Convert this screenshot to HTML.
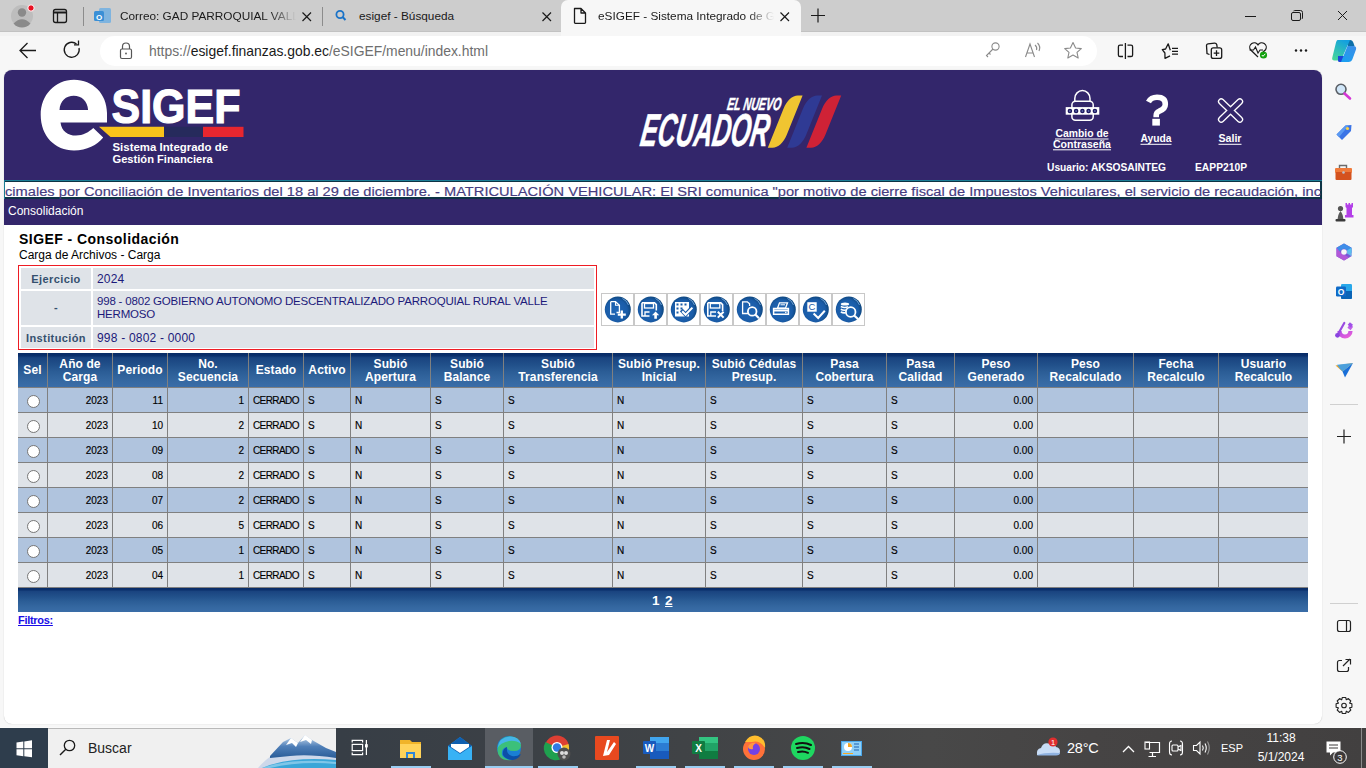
<!DOCTYPE html>
<html><head><meta charset="utf-8">
<style>
*{margin:0;padding:0;box-sizing:border-box}
html,body{width:1366px;height:768px;overflow:hidden;background:#f7f7f7;font-family:"Liberation Sans",sans-serif;position:relative}
.abs{position:absolute}
#tabs{left:0;top:0;width:1366px;height:31px;background:#cdcdcd}
.tabt{font-size:11.8px;color:#1a1a1a;white-space:nowrap;line-height:16px}
#toolbar{left:0;top:31px;width:1366px;height:39px;background:#f7f7f7}
#url{left:100px;top:36px;width:997px;height:30px;background:#fff;border-radius:15px}
#sidebar{left:1322px;top:70px;width:44px;height:658px;background:#f7f7f7}
#page{left:4px;top:70px;width:1318px;height:654px;background:#fff;border-radius:8px;overflow:hidden;box-shadow:0 0 1px rgba(0,0,0,.3)}
#taskbar{left:0;top:728px;width:1366px;height:40px;background:#3c3a3b}
#hdr{left:0;top:0;width:1318px;height:155px;background:#33266b}
.btn{width:33px;height:33px;border:1px solid #c8c8c8;background:#fff}
.thd{background:linear-gradient(#072b66 0%,#0b306c 8%,#1a4480 14%,#21508a 35%,#2b5d96 55%,#3467a0 78%,#3a6da8 100%)}
.th{display:flex;align-items:center;justify-content:center;text-align:center;color:#fff;font-size:12px;font-weight:bold;line-height:13px;letter-spacing:0.1px;padding-top:1px}
.td{font-size:10px;color:#000;line-height:24px;white-space:nowrap;-webkit-text-stroke:0.15px #000}
.radio{width:13px;height:13px;border-radius:50%;background:#fff;border:1px solid #767676}
</style></head><body>
<!-- TAB STRIP -->
<div id="tabs" class="abs">
  <svg class="abs" style="left:0;top:0" width="1366" height="31">
    <!-- avatar -->
    <circle cx="22" cy="16" r="11" fill="#bdbdbd"/>
    <circle cx="22" cy="12.5" r="4.2" fill="#8a8a8a"/>
    <path d="M13.5 23.5 Q22 15 30.5 23.5 A11 11 0 0 1 13.5 23.5Z" fill="#8a8a8a"/>
    <circle cx="31" cy="8" r="3.2" fill="#e81123" stroke="#fff" stroke-width="1"/>
    <!-- tab actions -->
    <rect x="53.5" y="9.5" width="13" height="13" rx="2" fill="none" stroke="#1a1a1a" stroke-width="1.3"/>
    <line x1="53.5" y1="12.5" x2="66.5" y2="12.5" stroke="#1a1a1a" stroke-width="2"/>
    <line x1="57.5" y1="12" x2="57.5" y2="22.5" stroke="#1a1a1a" stroke-width="1.3"/>
    <line x1="83.5" y1="7" x2="83.5" y2="26" stroke="#8c8c8c" stroke-width="1"/>
    <!-- outlook icon -->
    <rect x="99" y="8" width="12" height="15" rx="1.5" fill="#7fb4df"/>
    <rect x="94" y="11" width="10" height="10" rx="1.5" fill="#3a8fd6"/>
    <text x="99" y="19.5" font-size="8" font-weight="bold" fill="#fff" text-anchor="middle" font-family="Liberation Sans">O</text>
    <line x1="322.5" y1="7" x2="322.5" y2="26" stroke="#8c8c8c" stroke-width="1"/>
    <!-- close x tab1 -->
    <path d="M302.5 12.5 L311 21 M311 12.5 L302.5 21" stroke="#1a1a1a" stroke-width="1.2"/>
    <!-- search icon -->
    <circle cx="340" cy="14.5" r="3.6" fill="none" stroke="#1a73c8" stroke-width="1.8"/>
    <line x1="342.8" y1="17.3" x2="345.5" y2="20" stroke="#1a73c8" stroke-width="2"/>
    <path d="M542.5 12.5 L551 21 M551 12.5 L542.5 21" stroke="#1a1a1a" stroke-width="1.2"/>
  </svg>
  <div class="abs tabt" style="left:120px;top:8px;width:176px;overflow:hidden;-webkit-mask-image:linear-gradient(90deg,#000 85%,transparent)">Correo: GAD PARROQUIAL VALLE</div>
  <div class="abs tabt" style="left:359px;top:8px">esigef - Búsqueda</div>
  <!-- active tab -->
  <div class="abs" style="left:561px;top:0;width:240px;height:31px;background:#f7f7f7;border-radius:7px 7px 0 0"></div>
  <svg class="abs" style="left:0;top:0" width="1366" height="31">
    <path d="M574.5 8.5 H581 L585.5 13 V22.5 A0.8 0.8 0 0 1 584.7 23.3 H575.3 A0.8 0.8 0 0 1 574.5 22.5Z M581 8.5 V13 H585.5" fill="none" stroke="#1a1a1a" stroke-width="1.3" stroke-linejoin="round"/>
    <path d="M780.5 12.5 L789 21 M789 12.5 L780.5 21" stroke="#1a1a1a" stroke-width="1.2"/>
    <path d="M811 15.5 H825 M818 8.5 V22.5" stroke="#1a1a1a" stroke-width="1.2"/>
    <!-- window controls -->
    <line x1="1245" y1="16.5" x2="1256" y2="16.5" stroke="#1a1a1a" stroke-width="1"/>
    <rect x="1291.5" y="12.5" width="9" height="8" rx="1.5" fill="none" stroke="#1a1a1a" stroke-width="1"/>
    <path d="M1293.5 11 Q1294 10.5 1296 10.5 H1300.5 Q1302.5 10.5 1302.5 12.5 V17 Q1302.5 18.5 1302 19" fill="none" stroke="#1a1a1a" stroke-width="1"/>
    <path d="M1338 11 L1347 20 M1347 11 L1338 20" stroke="#1a1a1a" stroke-width="1"/>
  </svg>
  <div class="abs tabt" style="left:598px;top:8px;width:176px;overflow:hidden;white-space:nowrap;-webkit-mask-image:linear-gradient(90deg,#000 85%,transparent)">eSIGEF - Sistema Integrado de Gestión</div>
</div>
<!-- TOOLBAR -->
<div id="toolbar" class="abs"></div>
<div class="abs" style="left:0;top:31px;width:1366px;height:1px;background:#c2c2c2"></div>
<div class="abs" style="left:0;top:32px;width:1366px;height:4px;background:#f2f2f2"></div>
<div class="abs" style="left:561px;top:31px;width:240px;height:5px;background:#f7f7f7"></div>
<div id="url" class="abs"></div>
<svg class="abs" style="left:0;top:31px" width="1366" height="39">
  <!-- back -->
  <path d="M20.5 19.5 H36 M27.5 12 L20 19.5 L27.5 27" fill="none" stroke="#1a1a1a" stroke-width="1.3"/>
  <!-- refresh -->
  <path d="M79 17 A7.5 7.5 0 1 1 76.5 13" fill="none" stroke="#1a1a1a" stroke-width="1.3"/>
  <path d="M78.5 9.5 V13.8 H74" fill="none" stroke="#1a1a1a" stroke-width="1.3"/>
  <!-- lock -->
  <g transform="translate(0,1)"><rect x="120.5" y="17" width="11" height="9.5" rx="1.5" fill="none" stroke="#555" stroke-width="1.2"/>
  <path d="M122.5 17 V14.5 A3.5 3.5 0 0 1 129.5 14.5 V17" fill="none" stroke="#555" stroke-width="1.2"/>
  <circle cx="126" cy="21.5" r="0.9" fill="#555"/></g>
  <!-- key -->
  <circle cx="995.5" cy="15.5" r="3.6" fill="none" stroke="#8a8a8a" stroke-width="1.1"/>
  <path d="M993 18 L986.5 24.5 L988 26 M989 22 L990.5 23.5" fill="none" stroke="#8a8a8a" stroke-width="1.1"/>
  <!-- read aloud -->
  <path d="M1025.5 26 L1030 13 L1034.5 26 M1027 22 H1033" fill="none" stroke="#8a8a8a" stroke-width="1.1"/>
  <path d="M1035 14 Q1037.5 16 1036.5 19 M1037.5 12 Q1041 15.5 1039 20" fill="none" stroke="#8a8a8a" stroke-width="1.1"/>
  <!-- star -->
  <path d="M1073 11.5 L1075.6 17 L1081.3 17.6 L1077 21.4 L1078.2 27 L1073 24.1 L1067.8 27 L1069 21.4 L1064.7 17.6 L1070.4 17Z" fill="none" stroke="#8a8a8a" stroke-width="1.1" stroke-linejoin="round"/>
  <!-- split -->
  <g transform="translate(0,-31)" fill="none" stroke="#1a1a1a" stroke-width="1.3">
    <path d="M1123 45.2 H1120 Q1118.4 45.2 1118.4 46.8 V54.9 Q1118.4 56.5 1120 56.5 H1123"/>
    <path d="M1127.5 45.2 H1131 Q1132.6 45.2 1132.6 46.8 V54.9 Q1132.6 56.5 1131 56.5 H1127.5"/>
    <path d="M1125.4 43 V59"/>
  </g>
  <!-- favorites -->
  <g transform="translate(0,-31)" fill="none" stroke="#1a1a1a" stroke-width="1.3" stroke-linejoin="round">
    <path d="M1170.3 50.2 L1168.2 43.8 L1165.6 49 L1162.3 49.6 L1164.9 53 L1165 58.3 L1170 55.8"/>
    <path d="M1172 48.4 H1178 M1172 51.3 H1178 M1172 54.2 H1178"/>
  </g>
  <!-- collections -->
  <g transform="translate(0,-31)" fill="none" stroke="#1a1a1a" stroke-width="1.3">
    <path d="M1209.5 54.5 L1207 53.5 L1206.5 45.5 Q1206.5 44 1208 43.8 L1214.5 43.2 Q1216.3 43.1 1216.8 44.8 L1217.2 47.5"/>
    <rect x="1211.3" y="47.9" width="10.4" height="10.5" rx="2"/>
    <path d="M1216.5 50.3 V56 M1213.7 53.15 H1219.3"/>
  </g>
  <!-- health -->
  <path d="M1258 26 L1250.5 18.8 A4 4 0 0 1 1258 13.8 A4 4 0 0 1 1265.5 18.8 L1263 21" fill="none" stroke="#1a1a1a" stroke-width="1.2"/>
  <path d="M1249.5 19 H1253.5 L1255.5 16 L1258 22 L1260 19 H1263" fill="none" stroke="#1a1a1a" stroke-width="1.1"/>
  <circle cx="1263.5" cy="24" r="3.6" fill="#13a10e"/>
  <path d="M1261.8 24 L1263 25.3 L1265.3 22.8" fill="none" stroke="#fff" stroke-width="1"/>
  <!-- more -->
  <circle cx="1296" cy="19.5" r="1.2" fill="#1a1a1a"/><circle cx="1301" cy="19.5" r="1.2" fill="#1a1a1a"/><circle cx="1306" cy="19.5" r="1.2" fill="#1a1a1a"/>
  <!-- copilot -->
  <defs>
    <linearGradient id="cpA" x1="0.7" y1="0" x2="0.2" y2="1"><stop offset="0" stop-color="#139fe0"/><stop offset="1" stop-color="#46d69a"/></linearGradient>
    <linearGradient id="cpB" x1="0.8" y1="0" x2="0.2" y2="1"><stop offset="0" stop-color="#3a8ee8"/><stop offset="1" stop-color="#1aa0f0"/></linearGradient>
  </defs>
  <g transform="translate(0,-31)">
  <path d="M1345 40 H1350 Q1352.5 40 1353.5 43 L1354.5 46 H1348Z" fill="#0d6fa8"/>
  <path d="M1337.5 40 H1350 L1342 58 Q1341 60.5 1338.5 60.5 H1334.5 Q1331.5 60.5 1332.3 57.5 L1336 42.5 Q1336.6 40 1337.5 40Z" fill="url(#cpA)"/>
  <path d="M1338 56 L1345 56 L1342 62 H1339.5 Q1337.5 62 1338 60Z" fill="#1d46d8"/>
  <path d="M1347.5 46 H1353.5 Q1356.8 46 1356 49.5 L1352.5 59 Q1351.5 62 1348.5 62 H1341 L1347.5 46Z" fill="url(#cpB)"/>
  </g>
</svg>
<div class="abs" style="left:149px;top:43px;font-size:13.9px;color:#6e6e6e;white-space:nowrap">https://<span style="color:#1a1a1a">esigef.finanzas.gob.ec</span>/eSIGEF/menu/index.html</div>
<div id="sidebar" class="abs"></div>
<div id="page" class="abs">
  <div id="hdr" class="abs"></div>
  <div class="abs" style="left:0;top:110px;width:1318px;height:19px;background:#0d3345;border-top:1px solid #1a7d96;border-left:1px solid #1a7d96"></div>
  <div class="abs" style="left:1px;top:112px;width:1315px;height:15px;background:#fff"></div>
</div>
<svg class="abs" style="left:0;top:0" width="1366" height="768">
  <!-- eSIGEF logo -->
  <path fill="#fff" fill-rule="evenodd" d="M107 122.4 L60.5 122.4 C61.5 131 68 135.5 76 135.5 C83 135.5 89 132 93.3 128 L103.2 137.5 C97 145 87 150.5 74 150.5 C55 150.5 40.7 136 40.7 115 C40.7 95 55 79.7 74 79.7 C93 79.7 107 94 107 113 Z M59.5 109.9 C60 101 66 95.8 73.8 95.8 C81.5 95.8 87.5 101 88.1 109.9 Z"/>
  <text x="111.5" y="122.5" font-family="Liberation Sans" font-weight="bold" font-size="49" fill="#fff" stroke="#fff" stroke-width="1.2" textLength="129" lengthAdjust="spacingAndGlyphs">SIGEF</text>
  <path d="M99 126.8 H164 V137 H110.5 Z" fill="#f9c31a"/>
  <rect x="164" y="126.8" width="39" height="10.2" fill="#262a5c"/>
  <rect x="203" y="126.8" width="40.5" height="10.2" fill="#e8262f"/>
  <text x="112.5" y="150.7" font-family="Liberation Sans" font-weight="bold" font-size="11.2" fill="#fff" textLength="115.5" lengthAdjust="spacingAndGlyphs">Sistema Integrado de</text>
  <text x="112.5" y="162.8" font-family="Liberation Sans" font-weight="bold" font-size="11.2" fill="#fff" textLength="100.3" lengthAdjust="spacingAndGlyphs">Gestión Financiera</text>
  <!-- EL NUEVO ECUADOR -->
  <g font-family="Liberation Sans" font-weight="bold" font-style="italic" fill="#fff" stroke="#fff" stroke-width="0.5">
    <text x="0" y="0" font-size="17.5" textLength="54" lengthAdjust="spacingAndGlyphs" transform="translate(726.5,110.1) skewX(-9)">EL NUEVO</text>
    <text x="0" y="0" font-size="46" textLength="128" lengthAdjust="spacingAndGlyphs" transform="translate(639,145.6) skewX(-9)">ECUADOR</text>
  </g>
  <path d="M802.6 95.5 L786.8 134.8 C783.7 142.6 778.0 147.8 772.6 147.8 L767.8 147.8 L783.6 108.5 C786.7 100.7 792.4 95.5 797.8 95.5 Z" fill="#f0c531"/>
  <path d="M822.0 95.5 L806.2 134.8 C803.1 142.6 797.4 147.8 792.0 147.8 L787.2 147.8 L803.0 108.5 C806.1 100.7 811.8 95.5 817.2 95.5 Z" fill="#2f3a94"/>
  <path d="M841.2 95.5 L825.4 134.8 C822.3 142.6 816.6 147.8 811.2 147.8 L806.4 147.8 L822.2 108.5 C825.3 100.7 831.0 95.5 836.4 95.5 Z" fill="#cf2236"/>
  <!-- lock icon -->
  <g fill="none" stroke="#fff" stroke-width="1.5">
    <path d="M1074.8 101 V98.5 A7.6 8 0 0 1 1090 98.5 V101"/>
    <rect x="1071.9" y="101.2" width="21.3" height="19" rx="3.5"/>
  </g>
  <rect x="1065.7" y="107.1" width="33.6" height="7.6" fill="#fff"/>
  <g fill="#1d1660"><circle cx="1069.9" cy="111" r="2.3"/><circle cx="1076.1" cy="111" r="2.3"/><circle cx="1082.4" cy="111" r="2.3"/><circle cx="1088.6" cy="111" r="2.3"/><circle cx="1094.9" cy="111" r="2.3"/></g>
  <g fill="#5a6aa8"><circle cx="1069.9" cy="111" r="0.9"/><circle cx="1076.1" cy="111" r="0.9"/><circle cx="1082.4" cy="111" r="0.9"/><circle cx="1088.6" cy="111" r="0.9"/><circle cx="1094.9" cy="111" r="0.9"/></g>
  <!-- ? -->
  <path d="M1148.5 102 Q1151 97.3 1157 97.3 Q1165.3 97.3 1165.3 104.3 Q1165.3 109 1159.5 111 Q1156.2 112.3 1156.2 115.5 V117.2" fill="none" stroke="#fff" stroke-width="5.6"/>
  <rect x="1152.3" y="118.8" width="7.6" height="6.8" fill="#fff"/>
  <!-- X outline -->
  <path d="M1221.2 101.5 L1239.9 119.5 M1239.9 101.5 L1221.2 119.5" stroke="#fff" stroke-width="6.6" stroke-linecap="round"/>
  <path d="M1221.2 101.5 L1239.9 119.5 M1239.9 101.5 L1221.2 119.5" stroke="#33266b" stroke-width="4" stroke-linecap="round"/>
  <!-- labels -->
  <g font-family="Liberation Sans" font-weight="bold" font-size="11" fill="#fff" text-anchor="middle">
    <text x="1082" y="136.8" textLength="53" lengthAdjust="spacingAndGlyphs">Cambio de</text>
    <text x="1082" y="147.7" textLength="58" lengthAdjust="spacingAndGlyphs">Contraseña</text>
    <text x="1156" y="142" textLength="31" lengthAdjust="spacingAndGlyphs">Ayuda</text>
    <text x="1230" y="142" textLength="23" lengthAdjust="spacingAndGlyphs">Salir</text>
  </g>
  <g fill="#fff">
    <rect x="1055" y="138.5" width="53.5" height="1"/>
    <rect x="1053" y="149.3" width="58" height="1"/>
    <rect x="1140.5" y="143.8" width="31" height="1"/>
    <rect x="1218.5" y="143.8" width="23" height="1"/>
  </g>
  <g font-family="Liberation Sans" font-weight="bold" font-size="10" fill="#fff">
    <text x="1047" y="171.4" textLength="119" lengthAdjust="spacingAndGlyphs">Usuario: AKSOSAINTEG</text>
    <text x="1195" y="171.4" textLength="52" lengthAdjust="spacingAndGlyphs">EAPP210P</text>
  </g>
  <!-- marquee text -->
  <text x="5" y="195.5" font-family="Liberation Sans" font-size="12.5" fill="#463c80" stroke="#463c80" stroke-width="0.15" textLength="1316" lengthAdjust="spacingAndGlyphs">cimales por Conciliación de Inventarios del 18 al 29 de diciembre. - MATRICULACIÓN VEHICULAR: El SRI comunica "por motivo de cierre fiscal de Impuestos Vehiculares, el servicio de recaudación, inc</text>
  <text x="8" y="215" font-family="Liberation Sans" font-size="12" fill="#fff" textLength="75.5" lengthAdjust="spacingAndGlyphs">Consolidación</text>
</svg>
<div class="abs" style="left:19px;top:231px;font-size:14px;font-weight:bold;letter-spacing:0.45px;color:#000;line-height:16px;white-space:nowrap">SIGEF - Consolidación</div>
<div class="abs" style="left:19px;top:247.5px;font-size:12px;color:#000;line-height:14px;white-space:nowrap">Carga de Archivos - Carga</div>
<div class="abs" style="left:18px;top:265px;width:579px;height:85px;border:1px solid #ee1c24"></div>
<div class="abs" style="left:21px;top:268px;width:70px;height:21px;background:#dfe3e8;font-size:11px;font-weight:bold;color:#34506e;letter-spacing:0.4px;text-align:center;white-space:nowrap;line-height:23px">Ejercicio</div>
<div class="abs" style="left:93px;top:268px;width:501px;height:21px;background:#dfe3e8;font-size:12px;color:#1c1a7a;white-space:nowrap;line-height:23px;padding-left:4px;letter-spacing:0.2px">2024</div>
<div class="abs" style="left:21px;top:291px;width:70px;height:34px;background:#dfe3e8;font-size:11px;font-weight:bold;color:#34506e;letter-spacing:0.4px;text-align:center;white-space:nowrap;line-height:33px">-</div>
<div class="abs" style="left:93px;top:291px;width:501px;height:34px;background:#dfe3e8"></div>
<div class="abs" style="left:97px;top:295px;font-size:12px;color:#1c1a7a;white-space:nowrap;line-height:13px;font-size:11.5px;letter-spacing:-0.19px">998 - 0802 GOBIERNO AUTONOMO DESCENTRALIZADO PARROQUIAL RURAL VALLE<br>HERMOSO</div>
<div class="abs" style="left:21px;top:327px;width:70px;height:21px;background:#dfe3e8;font-size:11px;font-weight:bold;color:#34506e;letter-spacing:0.4px;text-align:center;white-space:nowrap;line-height:23px">Institución</div>
<div class="abs" style="left:93px;top:327px;width:501px;height:21px;background:#dfe3e8;font-size:12px;color:#1c1a7a;white-space:nowrap;line-height:23px;padding-left:4px;letter-spacing:0.2px">998 - 0802 - 0000</div>
<div class="abs thd" style="left:18px;top:353px;width:1290px;height:34px"></div>
<div class="abs" style="left:18px;top:387px;width:1290px;height:1px;background:#808080"></div>
<div class="abs th" style="left:18px;top:353px;width:29px;height:34px">Sel</div>
<div class="abs th" style="left:48px;top:353px;width:64px;height:34px">Año de<br>Carga</div>
<div class="abs th" style="left:113px;top:353px;width:54px;height:34px">Periodo</div>
<div class="abs th" style="left:168px;top:353px;width:80px;height:34px">No.<br>Secuencia</div>
<div class="abs th" style="left:249px;top:353px;width:54px;height:34px">Estado</div>
<div class="abs th" style="left:304px;top:353px;width:46px;height:34px">Activo</div>
<div class="abs th" style="left:351px;top:353px;width:79px;height:34px">Subió<br>Apertura</div>
<div class="abs th" style="left:431px;top:353px;width:72px;height:34px">Subió<br>Balance</div>
<div class="abs th" style="left:504px;top:353px;width:108px;height:34px">Subió<br>Transferencia</div>
<div class="abs th" style="left:613px;top:353px;width:92px;height:34px">Subió Presup.<br>Inicial</div>
<div class="abs th" style="left:706px;top:353px;width:96px;height:34px">Subió Cédulas<br>Presup.</div>
<div class="abs th" style="left:803px;top:353px;width:83px;height:34px">Pasa<br>Cobertura</div>
<div class="abs th" style="left:887px;top:353px;width:67px;height:34px">Pasa<br>Calidad</div>
<div class="abs th" style="left:955px;top:353px;width:82px;height:34px">Peso<br>Generado</div>
<div class="abs th" style="left:1038px;top:353px;width:95px;height:34px">Peso<br>Recalculado</div>
<div class="abs th" style="left:1134px;top:353px;width:84px;height:34px">Fecha<br>Recalculo</div>
<div class="abs th" style="left:1219px;top:353px;width:89px;height:34px">Usuario<br>Recalculo</div>
<div class="abs" style="left:18px;top:388px;width:1290px;height:24px;background:#b0c4de"></div>
<div class="abs" style="left:18px;top:412px;width:1290px;height:1px;background:#808080"></div>
<div class="abs td" style="left:48px;top:389px;width:60px;text-align:right;">2023</div>
<div class="abs td" style="left:113px;top:389px;width:50px;text-align:right;">11</div>
<div class="abs td" style="left:168px;top:389px;width:76px;text-align:right;">1</div>
<div class="abs td" style="left:253px;top:389px;letter-spacing:-0.6px;">CERRADO</div>
<div class="abs td" style="left:308px;top:389px;">S</div>
<div class="abs td" style="left:355px;top:389px;">N</div>
<div class="abs td" style="left:435px;top:389px;">S</div>
<div class="abs td" style="left:508px;top:389px;">S</div>
<div class="abs td" style="left:617px;top:389px;">N</div>
<div class="abs td" style="left:710px;top:389px;">S</div>
<div class="abs td" style="left:807px;top:389px;">S</div>
<div class="abs td" style="left:891px;top:389px;">S</div>
<div class="abs td" style="left:955px;top:389px;width:78px;text-align:right;">0.00</div>
<div class="abs radio" style="left:27px;top:395px"></div>
<div class="abs" style="left:18px;top:413px;width:1290px;height:24px;background:#dfe3e8"></div>
<div class="abs" style="left:18px;top:437px;width:1290px;height:1px;background:#808080"></div>
<div class="abs td" style="left:48px;top:414px;width:60px;text-align:right;">2023</div>
<div class="abs td" style="left:113px;top:414px;width:50px;text-align:right;">10</div>
<div class="abs td" style="left:168px;top:414px;width:76px;text-align:right;">2</div>
<div class="abs td" style="left:253px;top:414px;letter-spacing:-0.6px;">CERRADO</div>
<div class="abs td" style="left:308px;top:414px;">S</div>
<div class="abs td" style="left:355px;top:414px;">N</div>
<div class="abs td" style="left:435px;top:414px;">S</div>
<div class="abs td" style="left:508px;top:414px;">S</div>
<div class="abs td" style="left:617px;top:414px;">N</div>
<div class="abs td" style="left:710px;top:414px;">S</div>
<div class="abs td" style="left:807px;top:414px;">S</div>
<div class="abs td" style="left:891px;top:414px;">S</div>
<div class="abs td" style="left:955px;top:414px;width:78px;text-align:right;">0.00</div>
<div class="abs radio" style="left:27px;top:420px"></div>
<div class="abs" style="left:18px;top:438px;width:1290px;height:24px;background:#b0c4de"></div>
<div class="abs" style="left:18px;top:462px;width:1290px;height:1px;background:#808080"></div>
<div class="abs td" style="left:48px;top:439px;width:60px;text-align:right;">2023</div>
<div class="abs td" style="left:113px;top:439px;width:50px;text-align:right;">09</div>
<div class="abs td" style="left:168px;top:439px;width:76px;text-align:right;">2</div>
<div class="abs td" style="left:253px;top:439px;letter-spacing:-0.6px;">CERRADO</div>
<div class="abs td" style="left:308px;top:439px;">S</div>
<div class="abs td" style="left:355px;top:439px;">N</div>
<div class="abs td" style="left:435px;top:439px;">S</div>
<div class="abs td" style="left:508px;top:439px;">S</div>
<div class="abs td" style="left:617px;top:439px;">N</div>
<div class="abs td" style="left:710px;top:439px;">S</div>
<div class="abs td" style="left:807px;top:439px;">S</div>
<div class="abs td" style="left:891px;top:439px;">S</div>
<div class="abs td" style="left:955px;top:439px;width:78px;text-align:right;">0.00</div>
<div class="abs radio" style="left:27px;top:445px"></div>
<div class="abs" style="left:18px;top:463px;width:1290px;height:24px;background:#dfe3e8"></div>
<div class="abs" style="left:18px;top:487px;width:1290px;height:1px;background:#808080"></div>
<div class="abs td" style="left:48px;top:464px;width:60px;text-align:right;">2023</div>
<div class="abs td" style="left:113px;top:464px;width:50px;text-align:right;">08</div>
<div class="abs td" style="left:168px;top:464px;width:76px;text-align:right;">2</div>
<div class="abs td" style="left:253px;top:464px;letter-spacing:-0.6px;">CERRADO</div>
<div class="abs td" style="left:308px;top:464px;">S</div>
<div class="abs td" style="left:355px;top:464px;">N</div>
<div class="abs td" style="left:435px;top:464px;">S</div>
<div class="abs td" style="left:508px;top:464px;">S</div>
<div class="abs td" style="left:617px;top:464px;">N</div>
<div class="abs td" style="left:710px;top:464px;">S</div>
<div class="abs td" style="left:807px;top:464px;">S</div>
<div class="abs td" style="left:891px;top:464px;">S</div>
<div class="abs td" style="left:955px;top:464px;width:78px;text-align:right;">0.00</div>
<div class="abs radio" style="left:27px;top:470px"></div>
<div class="abs" style="left:18px;top:488px;width:1290px;height:24px;background:#b0c4de"></div>
<div class="abs" style="left:18px;top:512px;width:1290px;height:1px;background:#808080"></div>
<div class="abs td" style="left:48px;top:489px;width:60px;text-align:right;">2023</div>
<div class="abs td" style="left:113px;top:489px;width:50px;text-align:right;">07</div>
<div class="abs td" style="left:168px;top:489px;width:76px;text-align:right;">2</div>
<div class="abs td" style="left:253px;top:489px;letter-spacing:-0.6px;">CERRADO</div>
<div class="abs td" style="left:308px;top:489px;">S</div>
<div class="abs td" style="left:355px;top:489px;">N</div>
<div class="abs td" style="left:435px;top:489px;">S</div>
<div class="abs td" style="left:508px;top:489px;">S</div>
<div class="abs td" style="left:617px;top:489px;">N</div>
<div class="abs td" style="left:710px;top:489px;">S</div>
<div class="abs td" style="left:807px;top:489px;">S</div>
<div class="abs td" style="left:891px;top:489px;">S</div>
<div class="abs td" style="left:955px;top:489px;width:78px;text-align:right;">0.00</div>
<div class="abs radio" style="left:27px;top:495px"></div>
<div class="abs" style="left:18px;top:513px;width:1290px;height:24px;background:#dfe3e8"></div>
<div class="abs" style="left:18px;top:537px;width:1290px;height:1px;background:#808080"></div>
<div class="abs td" style="left:48px;top:514px;width:60px;text-align:right;">2023</div>
<div class="abs td" style="left:113px;top:514px;width:50px;text-align:right;">06</div>
<div class="abs td" style="left:168px;top:514px;width:76px;text-align:right;">5</div>
<div class="abs td" style="left:253px;top:514px;letter-spacing:-0.6px;">CERRADO</div>
<div class="abs td" style="left:308px;top:514px;">S</div>
<div class="abs td" style="left:355px;top:514px;">N</div>
<div class="abs td" style="left:435px;top:514px;">S</div>
<div class="abs td" style="left:508px;top:514px;">S</div>
<div class="abs td" style="left:617px;top:514px;">N</div>
<div class="abs td" style="left:710px;top:514px;">S</div>
<div class="abs td" style="left:807px;top:514px;">S</div>
<div class="abs td" style="left:891px;top:514px;">S</div>
<div class="abs td" style="left:955px;top:514px;width:78px;text-align:right;">0.00</div>
<div class="abs radio" style="left:27px;top:520px"></div>
<div class="abs" style="left:18px;top:538px;width:1290px;height:24px;background:#b0c4de"></div>
<div class="abs" style="left:18px;top:562px;width:1290px;height:1px;background:#808080"></div>
<div class="abs td" style="left:48px;top:539px;width:60px;text-align:right;">2023</div>
<div class="abs td" style="left:113px;top:539px;width:50px;text-align:right;">05</div>
<div class="abs td" style="left:168px;top:539px;width:76px;text-align:right;">1</div>
<div class="abs td" style="left:253px;top:539px;letter-spacing:-0.6px;">CERRADO</div>
<div class="abs td" style="left:308px;top:539px;">S</div>
<div class="abs td" style="left:355px;top:539px;">N</div>
<div class="abs td" style="left:435px;top:539px;">S</div>
<div class="abs td" style="left:508px;top:539px;">S</div>
<div class="abs td" style="left:617px;top:539px;">N</div>
<div class="abs td" style="left:710px;top:539px;">S</div>
<div class="abs td" style="left:807px;top:539px;">S</div>
<div class="abs td" style="left:891px;top:539px;">S</div>
<div class="abs td" style="left:955px;top:539px;width:78px;text-align:right;">0.00</div>
<div class="abs radio" style="left:27px;top:545px"></div>
<div class="abs" style="left:18px;top:563px;width:1290px;height:24px;background:#dfe3e8"></div>
<div class="abs" style="left:18px;top:587px;width:1290px;height:1px;background:#808080"></div>
<div class="abs td" style="left:48px;top:564px;width:60px;text-align:right;">2023</div>
<div class="abs td" style="left:113px;top:564px;width:50px;text-align:right;">04</div>
<div class="abs td" style="left:168px;top:564px;width:76px;text-align:right;">1</div>
<div class="abs td" style="left:253px;top:564px;letter-spacing:-0.6px;">CERRADO</div>
<div class="abs td" style="left:308px;top:564px;">S</div>
<div class="abs td" style="left:355px;top:564px;">N</div>
<div class="abs td" style="left:435px;top:564px;">S</div>
<div class="abs td" style="left:508px;top:564px;">S</div>
<div class="abs td" style="left:617px;top:564px;">N</div>
<div class="abs td" style="left:710px;top:564px;">S</div>
<div class="abs td" style="left:807px;top:564px;">S</div>
<div class="abs td" style="left:891px;top:564px;">S</div>
<div class="abs td" style="left:955px;top:564px;width:78px;text-align:right;">0.00</div>
<div class="abs radio" style="left:27px;top:570px"></div>
<div class="abs" style="left:47px;top:353px;width:1px;height:235px;background:#808080"></div>
<div class="abs" style="left:112px;top:353px;width:1px;height:235px;background:#808080"></div>
<div class="abs" style="left:167px;top:353px;width:1px;height:235px;background:#808080"></div>
<div class="abs" style="left:248px;top:353px;width:1px;height:235px;background:#808080"></div>
<div class="abs" style="left:303px;top:353px;width:1px;height:235px;background:#808080"></div>
<div class="abs" style="left:350px;top:353px;width:1px;height:235px;background:#808080"></div>
<div class="abs" style="left:430px;top:353px;width:1px;height:235px;background:#808080"></div>
<div class="abs" style="left:503px;top:353px;width:1px;height:235px;background:#808080"></div>
<div class="abs" style="left:612px;top:353px;width:1px;height:235px;background:#808080"></div>
<div class="abs" style="left:705px;top:353px;width:1px;height:235px;background:#808080"></div>
<div class="abs" style="left:802px;top:353px;width:1px;height:235px;background:#808080"></div>
<div class="abs" style="left:886px;top:353px;width:1px;height:235px;background:#808080"></div>
<div class="abs" style="left:954px;top:353px;width:1px;height:235px;background:#808080"></div>
<div class="abs" style="left:1037px;top:353px;width:1px;height:235px;background:#808080"></div>
<div class="abs" style="left:1133px;top:353px;width:1px;height:235px;background:#808080"></div>
<div class="abs" style="left:1218px;top:353px;width:1px;height:235px;background:#808080"></div>
<div class="abs thd" style="left:18px;top:588px;width:1290px;height:24px"></div>
<div class="abs" style="left:652px;top:593px;font-size:13.5px;font-weight:bold;color:#fff;line-height:15px;white-space:nowrap">1<span style="text-decoration:underline;margin-left:5.5px;letter-spacing:0">2</span></div>
<div class="abs" style="left:18px;top:613px;font-size:11px;font-weight:bold;color:#1a0ee6;text-decoration:underline;line-height:14px;letter-spacing:-0.3px">Filtros:</div><svg class="abs" style="left:601px;top:293px" width="264" height="33">
<defs><radialGradient id="bg1" cx="0.45" cy="0.55" r="0.55"><stop offset="0" stop-color="#2068b8"/><stop offset="0.75" stop-color="#1a5ca8"/><stop offset="1" stop-color="#0e477f"/></radialGradient>
<linearGradient id="hl" x1="0" y1="0" x2="1" y2="1"><stop offset="0" stop-color="#fff" stop-opacity="0"/><stop offset="1" stop-color="#9cc8ff" stop-opacity="0.9"/></linearGradient></defs>
<g transform="translate(0,0)">
<rect x="0.5" y="0.5" width="32" height="32" fill="#fff" stroke="#c8c8c8" stroke-width="1"/>
<circle cx="16.8" cy="16.4" r="13" fill="url(#bg1)"/>
<path d="M21.5 5.5 A11.5 11.5 0 0 1 27.5 12" fill="none" stroke="#8fc0f5" stroke-width="0.9" opacity="0.8"/>
<path d="M9.7 8.7 H14.5 L18.4 12.2 V19.5 H15.5 M9.7 8.7 V21.2 H14" fill="none" stroke="#fff" stroke-width="1.3"/>
<path d="M14.5 8.7 V12.2 H18.4" fill="none" stroke="#fff" stroke-width="1.1"/>
<path d="M20.8 17.6 V25.6 M16.8 21.6 H24.8" stroke="#fff" stroke-width="2.3"/>
</g>
<g transform="translate(33,0)">
<rect x="0.5" y="0.5" width="32" height="32" fill="#fff" stroke="#c8c8c8" stroke-width="1"/>
<circle cx="16.8" cy="16.4" r="13" fill="url(#bg1)"/>
<path d="M21.5 5.5 A11.5 11.5 0 0 1 27.5 12" fill="none" stroke="#8fc0f5" stroke-width="0.9" opacity="0.8"/>
<path d="M8 9.8 H20.5 L22.3 11.6 V17.5 M8 9.8 V23 H15.5" fill="none" stroke="#fff" stroke-width="1.6"/>
<rect x="10.5" y="10.5" width="9" height="4.5" fill="none" stroke="#fff" stroke-width="1.3"/>
<path d="M11 23 V19 H15.5" fill="none" stroke="#fff" stroke-width="1.3"/>
<path d="M21.6 18.5 L25.2 22.2 H22.9 V25.8 H20.3 V22.2 H18 Z" fill="#fff"/>
</g>
<g transform="translate(66,0)">
<rect x="0.5" y="0.5" width="32" height="32" fill="#fff" stroke="#c8c8c8" stroke-width="1"/>
<circle cx="16.8" cy="16.4" r="13" fill="url(#bg1)"/>
<path d="M21.5 5.5 A11.5 11.5 0 0 1 27.5 12" fill="none" stroke="#8fc0f5" stroke-width="0.9" opacity="0.8"/>
<rect x="8" y="9" width="14" height="14.5" fill="#fff"/>
<g fill="#1a5ca8"><rect x="9.5" y="10.5" width="2" height="2"/><rect x="13.5" y="10.5" width="2" height="2"/><rect x="17.5" y="10.5" width="2" height="2"/><rect x="9.5" y="14.5" width="2" height="2"/><rect x="13.5" y="14.5" width="2" height="2"/><rect x="9.5" y="18.5" width="2" height="2"/></g>
<path d="M14.3 17 L18.6 21.6 L26 13.6" fill="none" stroke="#1a5ca8" stroke-width="4"/>
<path d="M15.2 18.2 L18.6 21.8 L25.4 14.6" fill="none" stroke="#fff" stroke-width="2"/>
</g>
<g transform="translate(99,0)">
<rect x="0.5" y="0.5" width="32" height="32" fill="#fff" stroke="#c8c8c8" stroke-width="1"/>
<circle cx="16.8" cy="16.4" r="13" fill="url(#bg1)"/>
<path d="M21.5 5.5 A11.5 11.5 0 0 1 27.5 12" fill="none" stroke="#8fc0f5" stroke-width="0.9" opacity="0.8"/>
<path d="M7.8 9.8 H20.8 L22.6 11.6 V18 M7.8 9.8 V23 H16" fill="none" stroke="#fff" stroke-width="1.6"/>
<rect x="10.3" y="10.5" width="9.5" height="4.5" fill="none" stroke="#fff" stroke-width="1.3"/>
<path d="M10.8 23 V19 H16" fill="none" stroke="#fff" stroke-width="1.3"/>
<path d="M17.8 18.8 L23.6 24.6 M23.6 18.8 L17.8 24.6" stroke="#fff" stroke-width="2"/>
</g>
<g transform="translate(132,0)">
<rect x="0.5" y="0.5" width="32" height="32" fill="#fff" stroke="#c8c8c8" stroke-width="1"/>
<circle cx="16.8" cy="16.4" r="13" fill="url(#bg1)"/>
<path d="M21.5 5.5 A11.5 11.5 0 0 1 27.5 12" fill="none" stroke="#8fc0f5" stroke-width="0.9" opacity="0.8"/>
<path d="M15.5 20.5 H9.6 V8.8 H14.3 L16.6 10.8 V13" fill="none" stroke="#fff" stroke-width="1.3"/>
<circle cx="19.2" cy="18.4" r="4.3" fill="#1d63b0" stroke="#fff" stroke-width="1.8"/>
<path d="M22.3 21.5 L26 25.2" stroke="#fff" stroke-width="2.2"/>
</g>
<g transform="translate(165,0)">
<rect x="0.5" y="0.5" width="32" height="32" fill="#fff" stroke="#c8c8c8" stroke-width="1"/>
<circle cx="16.8" cy="16.4" r="13" fill="url(#bg1)"/>
<path d="M21.5 5.5 A11.5 11.5 0 0 1 27.5 12" fill="none" stroke="#8fc0f5" stroke-width="0.9" opacity="0.8"/>
<path d="M11.5 15.2 L13.5 9.8 H21.5 L19.5 15.2 Z" fill="none" stroke="#fff" stroke-width="1.3"/>
<path d="M14.5 11.8 H19" stroke="#fff" stroke-width="1"/>
<path d="M7.6 15.5 H22.4 V21.2 H7.6 Z" fill="none" stroke="#fff" stroke-width="1.5"/>
<path d="M8 17.5 H22" stroke="#fff" stroke-width="2"/>
<circle cx="19.8" cy="19.5" r="0.8" fill="#fff"/>
</g>
<g transform="translate(198,0)">
<rect x="0.5" y="0.5" width="32" height="32" fill="#fff" stroke="#c8c8c8" stroke-width="1"/>
<circle cx="16.8" cy="16.4" r="13" fill="url(#bg1)"/>
<path d="M21.5 5.5 A11.5 11.5 0 0 1 27.5 12" fill="none" stroke="#8fc0f5" stroke-width="0.9" opacity="0.8"/>
<rect x="8.3" y="9.2" width="9.4" height="9.5" fill="#fff"/>
<text x="13" y="17.3" font-family="Liberation Sans" font-size="9.5" fill="#1a5ca8" text-anchor="middle">C</text>
<path d="M14.6 20.5 L19.2 25 L25.8 17.8" fill="none" stroke="#fff" stroke-width="2"/>
</g>
<g transform="translate(231,0)">
<rect x="0.5" y="0.5" width="32" height="32" fill="#fff" stroke="#c8c8c8" stroke-width="1"/>
<circle cx="16.8" cy="16.4" r="13" fill="url(#bg1)"/>
<path d="M21.5 5.5 A11.5 11.5 0 0 1 27.5 12" fill="none" stroke="#8fc0f5" stroke-width="0.9" opacity="0.8"/>
<ellipse cx="13" cy="11" rx="4.2" ry="1.6" fill="#fff"/>
<path d="M8.8 13.5 Q13 15.5 16 13.6 M8.8 16.3 Q11.5 17.8 13.8 17 M8.8 19 Q11 20.2 13.5 19.8" fill="none" stroke="#fff" stroke-width="1.6"/>
<circle cx="18.7" cy="19" r="4.8" fill="#1d63b0" stroke="#fff" stroke-width="1.8"/>
<path d="M22.2 22.5 L26 26" stroke="#fff" stroke-width="2.2"/>
</g>
</svg><svg class="abs" style="left:1322px;top:60px" width="44" height="668">
  <g transform="translate(-1322,-60)">
  <!-- partial icon at top (cut) -->
  
  <!-- search -->
  <circle cx="1341" cy="89.3" r="5" fill="#d0e6f8" stroke="#5a5f66" stroke-width="1.6"/>
  <path d="M1344.5 93.5 L1350 98.5" stroke="#d436d6" stroke-width="2.6" stroke-linecap="round"/>
  <!-- tag -->
  <path d="M1336.5 134.5 L1345.5 125.5 L1351.5 125 L1351 131 L1342 140 Z" fill="#3b74e6"/>
  <path d="M1336.5 134.5 L1345.5 125.5 L1349 125.3 L1339 137 Z" fill="#5b9af2"/>
  <circle cx="1347.5" cy="128.5" r="1.6" fill="#ffd23f"/>
  <!-- toolbox -->
  <path d="M1339.5 168 V165.5 H1346.5 V168" fill="none" stroke="#6b6b6b" stroke-width="1.4"/>
  <rect x="1335" y="168" width="17" height="5" rx="1" fill="#f07a3a"/>
  <rect x="1335.5" y="172" width="16" height="8" rx="1" fill="#d4521e"/>
  <circle cx="1343.5" cy="172.5" r="1.3" fill="#b9c3cf"/>
  <!-- chess -->
  <circle cx="1340.5" cy="208.5" r="2.6" fill="#555"/>
  <path d="M1337.5 220 Q1338 214 1340.5 211 Q1343 214 1343.5 220 Z" fill="#5a5a5a"/>
  <rect x="1335.5" y="219" width="10" height="2.5" rx="1" fill="#3a3a3a"/>
  <path d="M1345.5 203 H1347 V204.5 H1348.5 V203 H1350 V204.5 H1351.5 V203 H1353 V207 L1352 208 V215 H1353.5 V217.5 H1345 V215 H1346.5 V208 L1345.5 207 Z" fill="#b33fe8"/>
  <!-- m365 -->
  <path d="M1344 243.5 L1351.5 247.8 V256.2 L1344 260.5 L1336.5 256.2 V247.8 Z" fill="#7a58d8"/>
  <path d="M1344 243.5 L1351.5 247.8 V253 L1344 248.5 L1338.5 251.5 L1336.5 247.8Z" fill="#3f8ee8"/>
  <path d="M1351.5 247.8 V256.2 L1347 253.5 V250.5Z" fill="#5fd0f0" opacity="0.8"/>
  <path d="M1336.5 247.8 V256.2 L1344 260.5 L1349 257.5 L1341 253Z" fill="#b258d8"/>
  <circle cx="1344" cy="252" r="2.8" fill="#f7f7f7"/>
  <!-- outlook -->
  <rect x="1341" y="284" width="11" height="15" rx="1.2" fill="#28a8ea"/>
  <path d="M1341 291 H1352 V298 A1.2 1.2 0 0 1 1350.8 299 H1342.2 A1.2 1.2 0 0 1 1341 298 Z" fill="#0a64b6"/>
  <rect x="1336" y="286.5" width="10" height="10" rx="1.2" fill="#0f6ac7"/>
  <text x="1341" y="295" font-family="Liberation Sans" font-weight="bold" font-size="8.5" fill="#fff" text-anchor="middle">O</text>
  <!-- designer brush -->
  <defs><linearGradient id="dsg" x1="0" y1="0" x2="1" y2="1"><stop offset="0" stop-color="#b04ae8"/><stop offset="1" stop-color="#e860d8"/></linearGradient></defs>
  <path d="M1339.5 331 A5.3 5.3 0 0 0 1350.5 331" fill="none" stroke="url(#dsg)" stroke-width="4.2"/>
  <path d="M1349 329 L1351.5 325.5" stroke="#c060e8" stroke-width="4"/>
  <path d="M1337.5 335 L1344.3 323" stroke="#9a4ce0" stroke-width="2.2" stroke-linecap="round"/>
  <circle cx="1337.5" cy="335.3" r="2.4" fill="#8a44e0"/>
  <rect x="1348.3" y="323" width="4" height="3.5" transform="rotate(40 1350.3 324.8)" fill="#a050e8"/>
  <!-- plane -->
  <path d="M1335.5 365.5 L1353 363 L1342.5 371.5 Z" fill="#f5a623"/>
  <path d="M1342.5 371.5 L1353 363 L1345 377.5 Z" fill="#1a6fd8"/>
  <path d="M1337 364.8 L1353 363 L1342.5 371.5 L1340 369Z" fill="#3aa0f0" opacity="0.9"/>
  <!-- sep -->
  <line x1="1330" y1="404.5" x2="1358" y2="404.5" stroke="#d0d0d0" stroke-width="1"/>
  <path d="M1337 436.5 H1351 M1344 429.5 V443.5" stroke="#222" stroke-width="1.2"/>
  <line x1="1330" y1="603.5" x2="1358" y2="603.5" stroke="#d0d0d0" stroke-width="1"/>
  <!-- split -->
  <rect x="1337.5" y="620.5" width="13" height="11" rx="2" fill="none" stroke="#222" stroke-width="1.2"/>
  <line x1="1346.5" y1="620.5" x2="1346.5" y2="631.5" stroke="#222" stroke-width="1.2"/>
  <!-- external -->
  <path d="M1342 660.5 H1339.5 A2 2 0 0 0 1337.5 662.5 V669.5 A2 2 0 0 0 1339.5 671.5 H1346.5 A2 2 0 0 0 1348.5 669.5 V667" fill="none" stroke="#222" stroke-width="1.2"/>
  <path d="M1343 666 L1350 659 M1345.5 659.5 H1350.5 V664.5" fill="none" stroke="#222" stroke-width="1.2"/>
  <!-- gear -->
  <path d="M1342.3 697.5 H1345.7 L1346.3 699.8 L1348.4 698.6 L1350.8 701 L1349.6 703.1 L1351.9 703.8 V707.2 L1349.6 707.9 L1350.8 710 L1348.4 712.4 L1346.3 711.2 L1345.7 713.5 H1342.3 L1341.7 711.2 L1339.6 712.4 L1337.2 710 L1338.4 707.9 L1336.1 707.2 V703.8 L1338.4 703.1 L1337.2 701 L1339.6 698.6 L1341.7 699.8 Z" fill="none" stroke="#222" stroke-width="1.1" stroke-linejoin="round"/>
  <circle cx="1344" cy="705.5" r="2.3" fill="none" stroke="#222" stroke-width="1.1"/>
  </g>
</svg>
<div id="taskbar" class="abs"></div>
<div class="abs" style="left:0;top:727px;width:1366px;height:1px;background:#fafafa"></div>
<svg class="abs" style="left:0;top:728px" width="1366" height="40">
  <defs>
    <linearGradient id="tbg" x1="0" x2="1"><stop offset="0" stop-color="#323a44"/><stop offset="0.25" stop-color="#373e46"/><stop offset="0.5" stop-color="#404346"/><stop offset="0.68" stop-color="#484848"/><stop offset="0.8" stop-color="#464444"/><stop offset="1" stop-color="#424040"/></linearGradient>
    <linearGradient id="mtn" x1="0" y1="0" x2="0" y2="1"><stop offset="0" stop-color="#cfe0f0"/><stop offset="0.5" stop-color="#4f7fb8"/><stop offset="1" stop-color="#2a5d98"/></linearGradient>
  </defs>
  <rect x="0" y="0" width="1366" height="40" fill="url(#tbg)"/>
  <rect x="0" y="0" width="48" height="40" fill="#2e3d4c"/>
  <!-- windows logo -->
  <g fill="#fff"><path d="M16.5 741.5 L23.3 740.6 V747.3 H16.5Z" transform="translate(0,-727)"/><path d="M24.3 740.4 L32 739.3 V747.3 H24.3Z" transform="translate(0,-727)"/><path d="M16.5 748.3 H23.3 V755.2 L16.5 754.3Z" transform="translate(0,-727)"/><path d="M24.3 748.3 H32 V756.3 L24.3 755.3Z" transform="translate(0,-727)"/></g>
  <!-- search box -->
  <rect x="48" y="0" width="288" height="40" fill="#f0f0f0"/>
  <rect x="48" y="0" width="288" height="1" fill="#b9b9b9"/>
  <circle cx="69.5" cy="17.5" r="5.2" fill="none" stroke="#1a1a1a" stroke-width="1.3"/>
  <line x1="65.8" y1="21.2" x2="60" y2="27" stroke="#1a1a1a" stroke-width="1.4"/>
  <!-- mountain picture -->
  <path d="M258 40 Q275 20 300 18 Q320 18 336 26 V40 Z" fill="#cdd8ea"/>
  <path d="M270 28 L283 14 L291 10 L298 15 L305 7 L312 12 L326 20 L336 24 V30 Q310 26 290 28 Q280 29 270 30 Z" fill="url(#mtn)"/>
  <path d="M291 10 L286 17 L292 15 L296 19 L298 15Z M305 7 L300 14 L306 12 L311 16 L312 12Z" fill="#fff"/>
  <path d="M262 40 Q290 28 336 32 V40 Z" fill="#3aa6d8"/>
  <path d="M262 40 Q290 30 336 34 V36 Q300 33 270 40Z" fill="#9cd4f0" opacity="0.7"/>
  <!-- task view -->
  <g fill="none" stroke="#fff" stroke-width="1.2">
    <path d="M352.2 14.5 V12.3 H362.6 V14.5 M352.2 24.5 V26.7 H362.6 V24.5"/>
    <rect x="352.2" y="16.4" width="10.4" height="6.2"/>
  </g>
  <path d="M366.4 12 V27" stroke="#fff" stroke-width="1.2"/>
  <rect x="365" y="16.2" width="2.8" height="3.2" fill="#fff"/>
  <!-- explorer -->
  <path d="M400 12 H410 L412 14 H421 V30 H400 Z" fill="#f0b429"/>
  <path d="M400 16 H421 V30 H400 Z" fill="#ffd35a"/>
  <path d="M406 30 V24 H415 V30 H413 V26 H408 V30Z" fill="#2f86d8"/>
  <!-- mail -->
  <path d="M448 18 L460 9 L472 18 V32 H448 Z" fill="#1f8fe0"/>
  <path d="M448 18 L460 9 L472 18 L460 26 Z" fill="#0f5fb0"/>
  <path d="M448 18 L460 26 L472 18 V32 H448 Z" fill="#38b2f5"/>
  <path d="M451 16 H469 V19 L460 25 L451 19Z" fill="#fff"/>
  <!-- edge highlight -->
  <rect x="485" y="0" width="48" height="40" fill="#595d63"/>
  <circle cx="509" cy="20" r="12" fill="#1a7fd4"/>
  <path d="M497.5 22 Q498 9 510 8.5 Q520 8.5 521 17 Q521 23 514 23 Q507 23 507 19 Q501 20 502 27 Q505 32 512 32 Q504 33 500 29 Q497.5 26 497.5 22Z" fill="#3cc07a"/>
  <path d="M497.5 20 Q499 9 510 8.5 Q519 8.8 521 16 Q516 12 509 13 Q500 15 497.5 20Z" fill="#45b5e8"/>
  <path d="M507 19 Q502 21 503 27 Q506 32 513 32 Q519 31 521 26 Q516 29 512 28 Q506 26 507 19Z" fill="#0c4fa8"/>
  <!-- chrome -->
  <circle cx="557" cy="19.5" r="12" fill="#dd3f33"/>
  <path d="M557 19.5 L568.5 16 A12 12 0 0 1 561 31 Z" fill="#f3c02e"/>
  <path d="M557 19.5 L561 31 A12 12 0 0 1 545.5 14 Z" fill="#1fa04f"/>
  <circle cx="557" cy="19.5" r="5.5" fill="#fff"/>
  <circle cx="557" cy="19.5" r="4.2" fill="#2f7ae5"/>
  <circle cx="564" cy="26" r="6.5" fill="#4f4f4f"/>
  <circle cx="562" cy="25" r="2" fill="#ddd"/><circle cx="566" cy="25" r="2" fill="#ddd"/><circle cx="564" cy="29" r="1.8" fill="#bbb"/>
  <!-- acrobat red -->
  <rect x="595" y="8" width="24" height="24" rx="1" fill="#e8491f"/>
  <path d="M603 28 L607 12 L610 12 L607 24 L614 14 L616 16 L609 27Z" fill="#fff"/>
  <!-- word -->
  <rect x="650" y="9" width="19" height="22" rx="1.5" fill="#2b7cd3"/>
  <rect x="650" y="9" width="19" height="6" fill="#41a5ee"/>
  <rect x="650" y="23" width="19" height="8" fill="#185abd"/>
  <rect x="643" y="13" width="13" height="13" rx="1" fill="#185abd"/>
  <text x="649.5" y="23.5" font-family="Liberation Sans" font-weight="bold" font-size="10" fill="#fff" text-anchor="middle">W</text>
  <!-- excel -->
  <rect x="699" y="9" width="19" height="22" rx="1.5" fill="#21a366"/>
  <rect x="699" y="9" width="19" height="6" fill="#33c481"/>
  <rect x="699" y="23" width="19" height="8" fill="#107c41"/>
  <rect x="692" y="13" width="13" height="13" rx="1" fill="#107c41"/>
  <text x="698.5" y="23.5" font-family="Liberation Sans" font-weight="bold" font-size="10" fill="#fff" text-anchor="middle">X</text>
  <!-- firefox -->
  <circle cx="754" cy="21" r="11" fill="#ff7139"/>
  <path d="M745 14 Q750 6 758 8 Q766 11 765 20 Q760 12 752 14Z" fill="#ffbd2e"/>
  <circle cx="754" cy="21" r="6" fill="#7542e5"/>
  <path d="M748 19 Q750 14 756 15 Q752 17 753 21 Q749 22 748 19Z" fill="#ff9640"/>
  <!-- spotify -->
  <circle cx="803" cy="20" r="12" fill="#1ed760"/>
  <path d="M796 16 Q804 13.5 811 17 M797 20 Q804 18 809.5 21 M798 24 Q803.5 22.5 808 24.8" fill="none" stroke="#111" stroke-width="2" stroke-linecap="round"/>
  <!-- control panel app -->
  <rect x="841" y="13" width="21" height="15" fill="#4aa8ec"/>
  <rect x="842" y="14" width="19" height="13" fill="#8fd0f8"/>
  <circle cx="848" cy="19" r="4" fill="#fff"/><path d="M848 19 V15 A4 4 0 0 1 852 19Z" fill="#f5a623"/>
  <path d="M854 16 H859 M854 19 H859 M854 22 H859" stroke="#2060b0" stroke-width="1.2"/>
  <rect x="843" y="25" width="10" height="1" fill="#f5a623"/>
  <!-- active underlines -->
  <g fill="#99cdf2">
    <rect x="391" y="38" width="40" height="2"/>
    <rect x="485" y="38" width="48" height="2"/>
    <rect x="538" y="38" width="40" height="2"/>
    <rect x="636" y="38" width="40" height="2"/>
    <rect x="685" y="38" width="40" height="2"/>
    <rect x="734" y="38" width="40" height="2"/>
    <rect x="783" y="38" width="40" height="2"/>
    <rect x="832" y="38" width="40" height="2"/>
  </g>
  <!-- tray: cloud -->
  <path d="M1037 27 Q1036 21 1041 20 Q1043 14 1049 15.5 Q1054 14 1056 19 Q1060 19.5 1060 23.5 Q1060 27 1056 27 Z" fill="#c8dcf5"/>
  <path d="M1037 27 Q1046 24 1060 25 Q1060 27 1056 27.5 H1040 Q1037 27.5 1037 27Z" fill="#8fb2e0"/>
  <circle cx="1053" cy="14" r="4.6" fill="#e02e2e"/>
  <text x="1053" y="17.2" font-family="Liberation Sans" font-size="7.5" fill="#fff" text-anchor="middle">1</text>
  <!-- caret -->
  <path d="M1123 24 L1128.5 18.5 L1134 24" fill="none" stroke="#fff" stroke-width="1.3"/>
  <!-- network -->
  <path d="M1145.5 14.5 H1159.5 V24.5 H1149.5 M1152.5 24.5 V28.5 M1148.5 28.5 H1156" fill="none" stroke="#fff" stroke-width="1.2"/>
  <rect x="1145" y="14" width="4.5" height="7" fill="none" stroke="#fff" stroke-width="1.1"/>
  <!-- meet now -->
  <path d="M1172 13 Q1169.5 13 1169.5 16 V24 Q1169.5 27 1172 27 M1180 13 Q1182.5 13 1182.5 16 V24 Q1182.5 27 1180 27" fill="none" stroke="#fff" stroke-width="1.1"/>
  <rect x="1172" y="17" width="6" height="6" rx="1" fill="none" stroke="#fff" stroke-width="1.1"/>
  <path d="M1178 19 L1181 17.5 V22.5 L1178 21" fill="none" stroke="#fff" stroke-width="1.1"/>
  <!-- volume -->
  <path d="M1193.5 17.5 H1196.5 L1200 14 V26 L1196.5 22.5 H1193.5 Z" fill="none" stroke="#fff" stroke-width="1.1"/>
  <path d="M1202.5 17.5 Q1204 20 1202.5 22.5 M1205 15.5 Q1207.5 20 1205 24.5" fill="none" stroke="#fff" stroke-width="1.1"/>
  <path d="M1207.5 13.5 Q1211 20 1207.5 26.5" fill="none" stroke="#999" stroke-width="1.1"/>
  <rect x="1361" y="0" width="1" height="40" fill="#8a8a8a"/>
  <!-- notification -->
  <path d="M1326.5 13.5 H1340.5 V24.5 H1333 L1330 27.5 V24.5 H1326.5 Z" fill="#fff"/>
  <path d="M1329 17 H1338 M1329 20 H1338" stroke="#3d3a3b" stroke-width="1"/>
  <circle cx="1340" cy="29" r="6.3" fill="#3d3a3b" stroke="#fff" stroke-width="1"/>
  <text x="1340" y="32.5" font-family="Liberation Sans" font-size="9.5" fill="#fff" text-anchor="middle">3</text>
</svg>
<div class="abs" style="left:88px;top:739px;font-size:14px;color:#222;line-height:18px">Buscar</div>
<div class="abs" style="left:1067px;top:739px;font-size:14.5px;color:#fff;line-height:18px;letter-spacing:-0.2px">28°C</div>
<div class="abs" style="left:1221px;top:741px;font-size:11px;color:#fff;line-height:14px">ESP</div>
<div class="abs" style="left:1241px;top:731px;width:80px;text-align:center;font-size:12px;color:#fff;line-height:14px">11:38</div>
<div class="abs" style="left:1241px;top:750px;width:80px;text-align:center;font-size:12px;color:#fff;line-height:14px">5/1/2024</div>
</body></html>
